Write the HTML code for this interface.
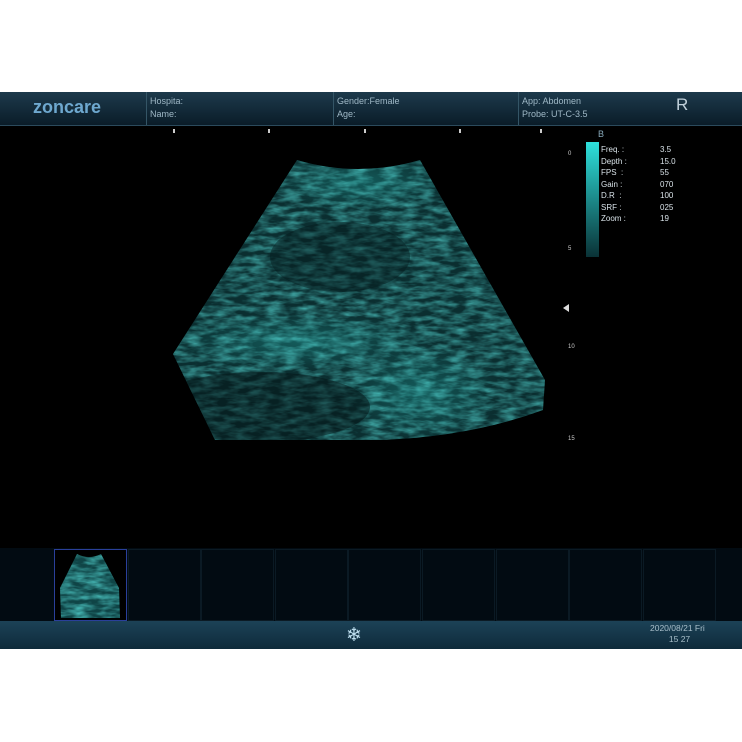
<!DOCTYPE html>
<html><head><style>
body{margin:0;width:742px;height:742px;background:#fff;position:relative;overflow:hidden;font-family:"Liberation Sans",sans-serif}
#scr{position:absolute;left:0;top:92px;width:742px;height:557px;background:#000}
#hdr{position:absolute;left:0;top:0;width:742px;height:33px;background:linear-gradient(#1d3a4c,#0a1c28);border-bottom:1px solid #2b4a5c}
.sep{position:absolute;top:0;width:1px;height:33px;background:#345566}
.t{position:absolute;color:#9fb8c6;font-size:9px;line-height:13px}
#logo{position:absolute;left:33px;top:5px;color:#6ea8cf;font-size:18px;font-weight:bold}
#strip{position:absolute;left:0;top:456px;width:742px;height:73px;background:#020b12}
.cell{position:absolute;top:1px;width:71px;height:70px;border:1px solid #0b1a24}
#bot{position:absolute;left:0;top:529px;width:742px;height:28px;background:linear-gradient(#1c4257,#0e2a3a)}
.p{position:absolute;color:#d8e2e8;font-size:8px;line-height:11.5px}
</style></head><body>
<div id="scr">
<div id="hdr">
<div id="logo">zoncare</div>
<div class="sep" style="left:146px"></div><div class="sep" style="left:333px"></div><div class="sep" style="left:518px"></div>
<div class="t" style="left:150px;top:3px">Hospita:<br>Name:</div>
<div class="t" style="left:337px;top:3px">Gender:Female<br>Age:</div>
<div class="t" style="left:522px;top:3px">App: Abdomen<br>Probe: UT-C-3.5</div>
<div class="t" style="left:676px;top:6px;font-size:17px;color:#c0d0da">R</div>
</div>
<svg width="742" height="456" style="position:absolute;left:0;top:0">
<defs>
<filter id="n" x="0" y="0" width="100%" height="100%">
<feTurbulence type="fractalNoise" baseFrequency="0.06 0.2" numOctaves="3" seed="4"/>
<feColorMatrix values="0 0 0 0 0.1  0 0 0 0 0.75  0 0 0 0 0.72  0 0 0 1.4 -0.45"/>
</filter>
<clipPath id="fan"><path d="M297,68 Q358,86 420,68 L545,288 L543,318 Q470,345 380,348 L215,348 L173,262 Z"/></clipPath>
<linearGradient id="tc" x1="0" y1="0" x2="0" y2="1"><stop offset="0" stop-color="#2ee0dc"/><stop offset="1" stop-color="#0a3236"/></linearGradient>
<radialGradient id="br" cx=".5" cy=".5" r=".5"><stop offset="0" stop-color="#1a7a78" stop-opacity=".6"/><stop offset="1" stop-color="#1a7a78" stop-opacity="0"/></radialGradient>
</defs>
<g clip-path="url(#fan)">
<rect x="160" y="60" width="400" height="300" fill="#0b2e30"/>
<ellipse cx="300" cy="250" rx="130" ry="30" fill="url(#br)"/>
<ellipse cx="420" cy="300" rx="80" ry="50" fill="url(#br)"/>
<ellipse cx="360" cy="90" rx="90" ry="30" fill="url(#br)"/>
<rect x="160" y="60" width="400" height="300" filter="url(#n)" opacity=".8"/>
<ellipse cx="340" cy="165" rx="70" ry="35" fill="#041a1c" opacity=".45"/>
<ellipse cx="260" cy="315" rx="110" ry="35" fill="#031416" opacity=".5"/>
</g>
<g fill="#ccc"><rect x="173" y="37" width="2" height="4"/><rect x="268" y="37" width="2" height="4"/><rect x="364" y="37" width="2" height="4"/><rect x="459" y="37" width="2" height="4"/><rect x="540" y="37" width="2" height="4"/></g>
<rect x="586" y="50" width="13" height="115" fill="url(#tc)"/>
<text x="598" y="45" fill="#8ab" font-size="9">B</text>
<g fill="#ccc" font-size="6"><text x="568" y="63">0</text><text x="568" y="158">5</text><text x="568" y="256">10</text><text x="568" y="348">15</text></g>
<path d="M563,216 l6,-4 v8z" fill="#ddd"/>
</svg>
<div class="p" style="left:601px;top:52px">Freq. :<br>Depth :<br>FPS &nbsp;:<br>Gain :<br>D.R &nbsp;:<br>SRF :<br>Zoom :</div>
<div class="p" style="left:660px;top:52px">3.5<br>15.0<br>55<br>070<br>100<br>025<br>19</div>
<div id="strip">
<div class="cell" style="left:54px;border-color:#2a3f9a;background:#000">
<svg width="71" height="70"><defs><clipPath id="th"><path d="M22,4 Q34,10 46,4 L64,38 L65,68 L6,68 L5,38 Z"/></clipPath></defs><g clip-path="url(#th)"><rect width="71" height="70" fill="#0f4446"/><rect width="71" height="70" filter="url(#n)"/></g></svg>
</div>
<div class="cell" style="left:128px"></div><div class="cell" style="left:201px"></div><div class="cell" style="left:275px"></div><div class="cell" style="left:348px"></div><div class="cell" style="left:422px"></div><div class="cell" style="left:496px"></div><div class="cell" style="left:569px"></div><div class="cell" style="left:643px"></div>
</div>
<div id="bot">
<div style="position:absolute;left:346px;top:3px;color:#bfe0f0;font-size:19px">❄</div>
<div class="t" style="left:650px;top:2px;font-size:8.5px;line-height:11px;color:#a9bfca">2020/08/21 Fri<br>&nbsp;&nbsp;&nbsp;&nbsp;&nbsp;&nbsp;&nbsp;&nbsp;15 27</div>
</div>
</div>
</body></html>
